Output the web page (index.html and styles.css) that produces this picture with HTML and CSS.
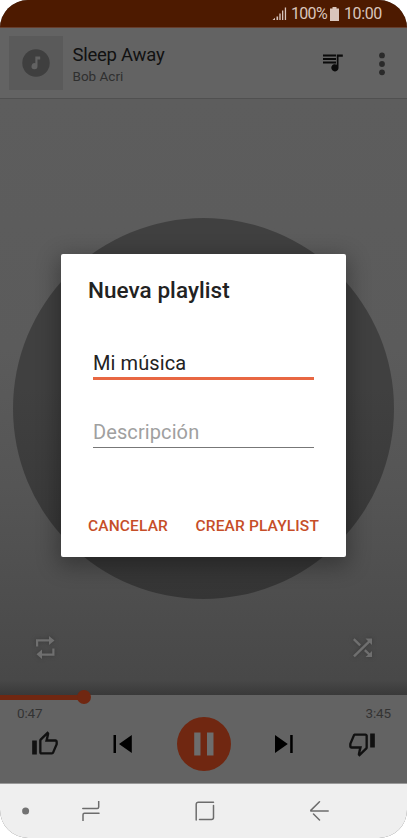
FILE: index.html
```
<!DOCTYPE html>
<html lang="es">
<head>
<meta charset="utf-8">
<title>Nueva playlist</title>
<link rel="stylesheet" href="styles.css">
</head>
<body>
<div class="phone">
  <div class="status">
    <svg class="signal" width="15" height="14" viewBox="0 0 15 14"><path d="M.5 13 3 10.800V13zM4.500 9.500h1.600V13H4.500zM7.300 6.500h1.400V13H7.300zM10 3.500h1.300V13H10zM12.800.5h1.300V13h-1.300z"/></svg>
    <span class="pct">100%</span>
    <svg class="battery" width="9" height="14" viewBox="0 0 9 14"><path d="M2.500 0h4v1.500H9V14H0V1.500h2.500z"/></svg>
    <span class="clock">10:00</span>
  </div>
  <header class="header">
    <div class="cover"><svg width="28" height="28" viewBox="0 0 28 28"><circle cx="14" cy="14" r="13.700" fill="#3f3f3f"/><path d="M13.300 7.500h4.900v3h-2.700v6.700a3 3 0 1 1-2.200-2.900z" fill="#626262"/></svg></div>
    <div class="track"><div class="song">Sleep Away</div><div class="artist">Bob Acri</div></div>
    <svg class="queue" width="20" height="18" viewBox="0 0 20 18"><path d="M0 .6h13v2H0zM0 4h13v2H0zM0 7.500h13v2H0zM13.800.6h6v2.200h-4.300v11.400a3.600 3.600 0 1 1-1.700-3.500z"/></svg>
    <svg class="more" width="6" height="24" viewBox="0 0 6 24"><circle cx="3" cy="3.400" r="2.900"/><circle cx="3" cy="12" r="2.900"/><circle cx="3" cy="20.300" r="2.900"/></svg>
  </header>
  <main class="stage">
    <div class="disc"></div>
    <div class="modes">
      <svg width="20" height="24" viewBox="0 0 20 24"><path d="M0 10.500V3.200h13V0l5.500 4.500L13 9V5.400H2.200v5.100zM18.500 12.500v7.300H6V23L.5 18.300 6 13.500v4.100h10.300v-5.100z"/></svg>
      <svg width="20" height="20" viewBox="0 0 20 20"><path d="M1.600.2 8 6.500 6.300 8.200 0 1.900zM12.500.5H19V7l-2.300-2.300L1.800 19.300.1 17.600 15 3zM12.700 11.200l4 4L19 13v6h-6.500l2.500-2.300-4-3.800z"/></svg>
    </div>
  </main>
  <section class="player">
    <div class="progress"><div class="played"></div><div class="thumb"></div></div>
    <div class="times"><span>0:47</span><span>3:45</span></div>
    <div class="controls">
      <svg class="rate" width="28" height="28" viewBox="0 0 24 24"><path d="M9 21h9c.83 0 1.540-.5 1.840-1.220l3.020-7.050c.09-.23.14-.47.14-.73v-2c0-1.100-.9-2-2-2h-6.310l.95-4.570.03-.32c0-.41-.17-.79-.44-1.060L14.170 1 7.580 7.590C7.220 7.950 7 8.450 7 9v10c0 1.100.9 2 2 2zM9 9l4.340-4.340L12 10h9v2l-3 7H9zM1 9h4v12H1z"/></svg>
      <svg class="prev" width="20" height="20" viewBox="0 0 20 20"><path d="M.5 1H3v18H.5zM18.800 1v18L6 10z"/></svg>
      <div class="pause"><svg width="22" height="24" viewBox="0 0 22 24"><path d="M1.200.5h6.300v23H1.200zM14 .5h6.500v23H14z"/></svg></div>
      <svg class="next" width="20" height="20" viewBox="0 0 20 20"><path d="M1 1l12.800 9L1 19zM16.200 1h2.500v18h-2.500z"/></svg>
      <svg class="rate down" width="28" height="28" viewBox="0 0 24 24"><path d="M9 21h9c.83 0 1.540-.5 1.840-1.220l3.020-7.050c.09-.23.14-.47.14-.73v-2c0-1.100-.9-2-2-2h-6.310l.95-4.570.03-.32c0-.41-.17-.79-.44-1.060L14.170 1 7.580 7.590C7.220 7.950 7 8.450 7 9v10c0 1.100.9 2 2 2zM9 9l4.340-4.340L12 10h9v2l-3 7H9zM1 9h4v12H1z"/></svg>
    </div>
  </section>
  <nav class="nav">
    <svg width="8" height="8" viewBox="0 0 8 8"><circle cx="3.600" cy="4" r="3.500" fill="#727272"/></svg>
    <svg class="line" width="18" height="20" viewBox="0 0 18 20"><path d="M.8 7.600h14.400a1.500 1.500 0 0 0 1.500-1.500V0M17 12.200H2.500A1.500 1.500 0 0 0 1 13.700V20"/></svg>
    <svg class="line" width="20" height="20" viewBox="0 0 20 20"><path d="M1.200 19V3.200a2 2 0 0 1 2-2h15.300M18.500 4.500v12a2 2 0 0 1-2 2H4.500"/></svg>
    <svg class="line" width="19" height="20" viewBox="0 0 19 20"><path d="M9.500.8.8 9.400M3.500 13l6 6M.8 10h17.400"/></svg>
  </nav>
  <div class="dialog">
    <h1>Nueva playlist</h1>
    <div class="field active">Mi música</div>
    <div class="field empty">Descripción</div>
    <div class="actions"><span class="cancel">CANCELAR</span><span class="create">CREAR PLAYLIST</span></div>
  </div>
</div>
</body>
</html>
```
FILE: styles.css
```
* { box-sizing: border-box; }
body { margin: 0; background: #fff; font-family: Roboto, sans-serif; }
svg { display: block; flex: none; }
.phone { position: relative; width: 407px; height: 838px; border-radius: 28px; overflow: hidden; display: flex; flex-direction: column; background: #636363; }
.status { height: 27px; background: #4d1a00; color: #d9c5bc; fill: #d9c5bc; display: flex; align-items: center; justify-content: flex-end; padding: 1px 25px 0 0; font-size: 16px; line-height: 26px; white-space: nowrap; }
.signal { margin-right: 4px; }
.pct { width: 36px; letter-spacing: -.7px; }
.battery { margin: 0 5px 0 3px; }
.clock { width: 38px; letter-spacing: -.4px; }
.header { height: 72px; display: flex; align-items: center; padding: 0 22px 0 9px; border-top: 1px solid #673e2d; border-bottom: 1px solid #505050; }
.cover { width: 54px; height: 54px; background: #5a5a5a; display: flex; align-items: center; justify-content: center; }
.track { flex: 1; padding-left: 9.500px; }
.song { font-size: 18.500px; line-height: 24px; color: #111; margin-top: 3px; letter-spacing: -.25px; }
.artist { font-size: 13.500px; line-height: 19px; color: #2f2f2f; }
.queue { fill: #0b0b0b; margin-right: 36px; }
.more { fill: #2a2a2a; margin-top: 1px; }
.stage { height: 596px; display: flex; flex-direction: column; align-items: center; background: linear-gradient(#5d5d5d 0, #5b5b5b 42%, #555 65%, #4d4d4d 85%, #484848 97.500%, #393939 100%); }
.disc { width: 381px; height: 381px; margin-top: 119px; border-radius: 50%; background: linear-gradient(#404040, #404040 45%, #353535); flex: none; }
.modes { width: 100%; display: flex; justify-content: space-between; align-items: center; padding: 0 34px 0 36px; margin-top: 37px; fill: #6f6f6f; }
.modes svg { filter: drop-shadow(0 0 2px #383838); }
.player { height: 89px; border-bottom: 1px solid #999; }
.progress { height: 4px; display: flex; align-items: center; }
.played { width: 78px; height: 5px; background: #702711; flex: none; }
.thumb { width: 14px; height: 14px; border-radius: 50%; background: #702711; flex: none; margin-left: -1px; }
.times { display: flex; justify-content: space-between; padding: 6px 16px 0 17px; height: 23px; font-size: 13.500px; line-height: 16px; letter-spacing: -.15px; color: #333; }
.controls { height: 54px; margin-top: -5px; display: flex; align-items: center; justify-content: space-between; padding: 0 31px; }
.rate { fill: #111; }
.down { transform: rotate(180deg); }
.prev { margin-left: 10px; }
.next { margin-right: 10px; }
.pause { width: 54px; height: 54px; border-radius: 50%; background: #702711; fill: #6d6d6d; display: flex; align-items: center; justify-content: center; }
.nav { height: 54px; background: #efefef; display: grid; grid-template-columns: 60px 113px 115px 1fr; align-items: center; padding-left: 22px; }
.line { fill: none; stroke: #6c6c6c; stroke-width: 1.500; stroke-linecap: round; }
.dialog { position: absolute; left: 61px; top: 254px; width: 285px; height: 303px; background: #fff; border-radius: 2px; box-shadow: 0 6px 22px 3px rgba(0,0,0,.32); padding: 22px 27px 0; }
h1 { margin: 0; font-size: 22.500px; line-height: 28px; font-weight: 500; letter-spacing: .05px; color: #222; }
.field { width: 221px; margin-left: 5px; font-size: 20px; line-height: 26px; padding: 0; white-space: nowrap; }
.active { margin-top: 46px; height: 30px; border-bottom: 3px solid #e86742; color: #222; letter-spacing: .1px; }
.empty { margin-top: 39px; height: 29px; border-bottom: 1px solid #777; color: #a0a0a0; letter-spacing: .1px; }
.actions { display: flex; justify-content: space-between; margin-top: 67px; color: #c64e28; font-size: 15.500px; line-height: 22px; letter-spacing: .15px; font-weight: 500; white-space: nowrap; }
```
